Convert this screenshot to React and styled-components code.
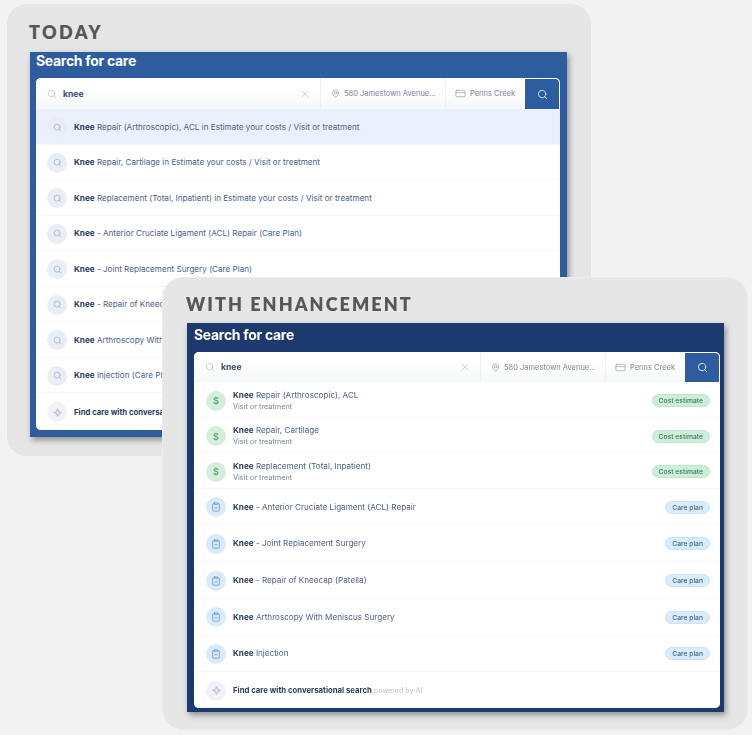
import React from 'react';
import styled, { createGlobalStyle } from 'styled-components';
import { Search, X, MapPin, CreditCard, ClipboardMinus, Sparkle } from 'lucide-react';

const GlobalStyle = createGlobalStyle`
  html, body {
    margin: 0;
    padding: 0;
    background: #f2f2f2;
    font-family: Inter, "Liberation Sans", sans-serif;
  }
`;

/* the reference is a soft upscaled capture, so everything gets a touch of blur */
const Page = styled.div`
  width: 752px;
  height: 735px;
  padding: 4px 0 0 7px;
  box-sizing: border-box;
  overflow: hidden;
  filter: blur(0.4px);
`;

const Panel = styled.section`
  width: 584px;
  height: ${(p) => p.$height}px;
  box-sizing: border-box;
  padding: 18px 0 0 ${(p) => p.$inset}px;
  background: #e6e6e6;
  border-radius: 20px;
`;

const OverlapPanel = styled(Panel)`
  position: relative;
  margin: -178px 0 0 156px;
  padding-top: 16px;
  box-shadow: 0 0 0 1px #ececec;
`;

const Heading = styled.h2`
  margin: 0 0 ${(p) => p.$gap}px -1px;
  font-family: Lato, "Liberation Sans", sans-serif;
  font-size: 18px;
  line-height: 20px;
  font-weight: 800;
  letter-spacing: ${(p) => p.$spacing}px;
  color: #575757;
`;

const Card = styled.div`
  width: 537px;
  box-sizing: border-box;
  padding: ${(p) => p.$pad};
  background: ${(p) => p.$color};
  box-shadow: 2px 3px 6px rgba(0, 0, 0, 0.38);
`;

const Title = styled.div`
  height: ${(p) => p.$height}px;
  box-sizing: border-box;
  padding-top: ${(p) => p.$top}px;
  font-size: 14px;
  line-height: 17px;
  font-weight: 700;
  letter-spacing: -0.3px;
  color: #fff;
`;

const Inner = styled.div`
  background: #fff;
  border-radius: 5px;
  overflow: hidden;
`;

const SearchBar = styled.div`
  height: ${(p) => p.$height}px;
  display: flex;
  align-items: stretch;
  background: linear-gradient(#fff 30%, #f6f7fa);
`;

const Query = styled.div`
  flex: 1;
  min-width: 0;
  display: flex;
  align-items: center;
  padding: 0 9px 0 11px;
  gap: 6px;
  color: #b4bac6;
`;

const QueryText = styled.span`
  flex: 1;
  font-size: 8.6px;
  font-weight: 700;
  color: #3a4a6c;
`;

const Field = styled.div`
  width: ${(p) => p.$width}px;
  flex: none;
  box-sizing: border-box;
  display: flex;
  align-items: center;
  gap: 4px;
  padding-left: ${(p) => p.$pad}px;
  border-left: 1px solid #eef0f4;
  font-size: 7.5px;
  color: #7d8596;
  white-space: nowrap;
`;

const SearchButton = styled.div`
  width: 34px;
  flex: none;
  margin: 1px 1px 0 0;
  display: flex;
  align-items: center;
  justify-content: center;
  background: #2d5d9f;
  border-top-right-radius: 4px;
  color: #dfe8f4;
`;

const Row = styled.div`
  height: ${(p) => p.$height}px;
  box-sizing: border-box;
  display: flex;
  align-items: center;
  gap: 7px;
  padding: ${(p) => p.$top}px 10px 0 ${(p) => p.$left}px;
  background: ${(p) => (p.$active ? '#ebf1fc' : '#fff')};
  border-bottom: 1px solid #f5f6f8;
`;

const Round = styled.div`
  width: 20px;
  height: 20px;
  flex: none;
  display: flex;
  align-items: center;
  justify-content: center;
  border-radius: 50%;
  background: ${(p) => p.$bg};
  color: ${(p) => p.$fg};
`;

const Dollar = styled.span`
  font-size: 9px;
  font-weight: 600;
`;

const RowText = styled.div`
  flex: 1;
  min-width: 0;
  white-space: nowrap;
  overflow: hidden;
  font-size: 8.14px;
  line-height: 11px;
  color: #4f6085;
`;

const Strong = styled.b`
  font-weight: 700;
  color: #2b3a5c;
`;

const FindStrong = styled(Strong)`
  font-size: 7.75px;
`;

const Link = styled.span`
  color: #3d639b;
`;

const Sub = styled.div`
  font-size: 7.3px;
  line-height: 11px;
  color: #7b8494;
`;

const Muted = styled.span`
  font-size: 7.1px;
  color: #bcc1ca;
`;

const Badge = styled.span`
  flex: none;
  height: 13px;
  box-sizing: border-box;
  padding: 0 6px;
  display: flex;
  align-items: center;
  border-radius: 7px;
  font-size: 6.75px;
  font-weight: 500;
  background: ${(p) => p.$bg};
  border: 1px solid ${(p) => p.$line};
  color: ${(p) => p.$fg};
`;

const SearchHeader = ({ height }) => (
  <SearchBar $height={height}>
    <Query>
      <Search size={10} strokeWidth={1.5} />
      <QueryText>knee</QueryText>
      <X size={12} strokeWidth={1.2} />
    </Query>
    <Field $width={125} $pad={10}>
      <MapPin size={9} strokeWidth={1.4} />
      580 Jamestown Avenue...
    </Field>
    <Field $width={80} $pad={9}>
      <CreditCard size={11} strokeWidth={1.2} />
      Penns Creek
    </Field>
    <SearchButton>
      <Search size={11} strokeWidth={2} />
    </SearchButton>
  </SearchBar>
);

const FindRow = ({ height, left, muted }) => (
  <Row $height={height} $top={2} $left={left}>
    <Round $bg="#f0f2f8" $fg="#8a93a8">
      <Sparkle size={9} strokeWidth={1.5} />
    </Round>
    <RowText>
      <FindStrong>Find care with conversational search</FindStrong>
      {muted && <Muted> powered by AI</Muted>}
    </RowText>
  </Row>
);

const todayRows = [
  [' Repair (Arthroscopic), ACL in Estimate your costs / Visit or treatment'],
  [' Repair, Cartilage in Estimate your costs / Visit or treatment'],
  [' Replacement (Total, Inpatient) in Estimate your costs / Visit or treatment'],
  [' - Anterior Cruciate Ligament (ACL) Repair ', '(Care Plan)'],
  [' - Joint Replacement Surgery ', '(Care Plan)'],
  [' - Repair of Kneecap (Patella) ', '(Care Plan)'],
  [' Arthroscopy With Meniscus Surgery ', '(Care Plan)'],
  [' Injection ', '(Care Plan)'],
];

const costRows = [' Repair (Arthroscopic), ACL', ' Repair, Cartilage', ' Replacement (Total, Inpatient)'];

const planRows = [
  ' - Anterior Cruciate Ligament (ACL) Repair',
  ' - Joint Replacement Surgery',
  ' - Repair of Kneecap (Patella)',
  ' Arthroscopy With Meniscus Surgery',
  ' Injection',
];

const App = () => (
  <Page>
    <GlobalStyle />
    <Panel $height={452} $inset={23}>
      <Heading $gap={10} $spacing={2.4}>TODAY</Heading>
      <Card $color="#2d5d9f" $pad="0 7px 7px 6px">
        <Title $height={26} $top={0}>Search for care</Title>
        <Inner>
          <SearchHeader height={31} />
          {todayRows.map(([text, link], i) => (
            <Row key={text} $height={35.5} $top={2} $left={11} $active={i === 0}>
              <Round $bg="#e8edf6" $fg="#98a3b8">
                <Search size={9} strokeWidth={1.6} />
              </Round>
              <RowText>
                <Strong>Knee</Strong>{text}
                {link && <Link>{link}</Link>}
              </RowText>
            </Row>
          ))}
          <FindRow height={37} left={11} />
        </Inner>
      </Card>
    </Panel>
    <OverlapPanel $height={451} $inset={24}>
      <Heading $gap={9} $spacing={2.07}>WITH ENHANCEMENT</Heading>
      <Card $color="#1c3a6e" $pad="0 4px 4px 7px">
        <Title $height={29} $top={3}>Search for care</Title>
        <Inner>
          <SearchHeader height={30} />
          {costRows.map((text) => (
            <Row key={text} $height={35.6} $top={3} $left={12}>
              <Round $bg="#d3eedd" $fg="#5aa97c">
                <Dollar>$</Dollar>
              </Round>
              <RowText>
                <Strong>Knee</Strong>{text}
                <Sub>Visit or treatment</Sub>
              </RowText>
              <Badge $bg="#cdeedb" $line="#bce6cd" $fg="#3c7a5a">Cost estimate</Badge>
            </Row>
          ))}
          {planRows.map((text) => (
            <Row key={text} $height={36.7} $top={1} $left={12}>
              <Round $bg="#d8ebf8" $fg="#4f83b4">
                <ClipboardMinus size={10} strokeWidth={1.5} />
              </Round>
              <RowText>
                <Strong>Knee</Strong>{text}
              </RowText>
              <Badge $bg="#d8ecf9" $line="#c8e3f5" $fg="#44688c">Care plan</Badge>
            </Row>
          ))}
          <FindRow height={36} left={12} muted />
        </Inner>
      </Card>
    </OverlapPanel>
  </Page>
);

export default App;
